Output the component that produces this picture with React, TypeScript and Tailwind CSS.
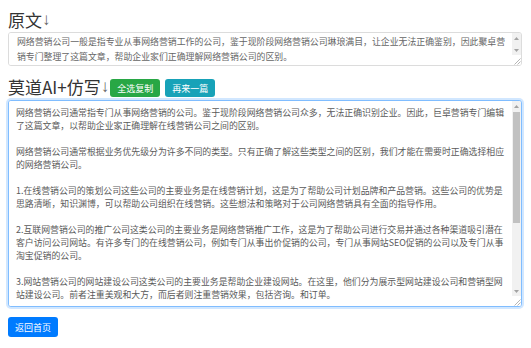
import React from 'react';

const original =
  '网络营销公司一般是指专业从事网络营销工作的公司，鉴于现阶段网络营销公司琳琅满目，让企业无法正确鉴别，因此聚卓营销专门整理了这篇文章，帮助企业家们正确理解网络营销公司的区别。';

const rewritten = [
  '网络营销公司通常指专门从事网络营销的公司。鉴于现阶段网络营销公司众多，无法正确识别企业。因此，巨卓营销专门编辑了这篇文章，以帮助企业家正确理解在线营销公司之间的区别。',
  '网络营销公司通常根据业务优先级分为许多不同的类型。只有正确了解这些类型之间的区别，我们才能在需要时正确选择相应的网络营销公司。',
  '1.在线营销公司的策划公司这些公司的主要业务是在线营销计划，这是为了帮助公司计划品牌和产品营销。这些公司的优势是思路清晰，知识渊博，可以帮助公司组织在线营销。这些想法和策略对于公司网络营销具有全面的指导作用。',
  '2.互联网营销公司的推广公司这类公司的主要业务是网络营销推广工作，这是为了帮助公司进行交易并通过各种渠道吸引潜在客户访问公司网站。有许多专门的在线营销公司，例如专门从事出价促销的公司，专门从事网站SEO促销的公司以及专门从事淘宝促销的公司。',
  '3.网站营销公司的网站建设公司这类公司的主要业务是帮助企业建设网站。在这里，他们分为展示型网站建设公司和营销型网站建设公司。前者注重美观和大方，而后者则注重营销效果，包括咨询。和订单。',
  '4.综合型网络营销公司这类公司的业务范围比较广泛，既包括网络营销策划，也包括网站建设和网络推广，能够为企业提供一站式的网络营销服务。',
  '总之，企业在选择网络营销公司时，应根据自身的实际需求选择合适的类型，这样才能真正发挥网络营销的作用，为企业带来更多的客户和订单。',
].join('\n\n');

const font = { fontFamily: '"Noto Sans CJK SC", "Noto Sans", sans-serif' };

function Heading({ children }: { children: React.ReactNode }) {
  return (
    <h4 className="text-[17px] leading-[20px] font-normal text-[#333] flex items-center">
      {children}
      <span className="text-[#666]" style={{ fontFamily: '"Liberation Sans", Arial, sans-serif' }}>
        ↓
      </span>
    </h4>
  );
}

// hand-drawn scrollbar column (arrows, track, optional thumb, resize grip)
function ScrollBar({ thumbTop, thumbHeight }: { thumbTop?: number; thumbHeight?: number }) {
  return (
    <div className="w-[9px] shrink-0 flex flex-col bg-[#f1f1f1]">
      <div className="h-[10px] flex items-center justify-center">
        <svg width="5" height="3" viewBox="0 0 5 3">
          <path d="M2.5 0L5 3H0z" fill="#a3a3a3" />
        </svg>
      </div>
      <div className="flex-1 flex flex-col">
        {thumbHeight ? (
          <div className="mx-[1px] bg-[#c1c1c1]" style={{ marginTop: thumbTop, height: thumbHeight }} />
        ) : null}
      </div>
      <div className="h-[10px] flex items-center justify-center">
        <svg width="5" height="3" viewBox="0 0 5 3">
          <path d="M0 0H5L2.5 3z" fill="#a3a3a3" />
        </svg>
      </div>
      <div className="h-[10px] bg-white flex items-end justify-end">
        <svg width="8" height="8" viewBox="0 0 8 8">
          <path d="M7.5 1.5L1.5 7.5M7.5 4.5L4.5 7.5" stroke="#b5b5b5" strokeWidth="1" />
        </svg>
      </div>
    </div>
  );
}

export default function App() {
  return (
    <div className="w-[531px] h-[348px] bg-white pl-[8px] pt-[10px]" style={font}>
      <Heading>原文</Heading>
      <div className="mt-[2px] w-[514px] h-[34px] flex border border-[#dcdcdc] rounded-[3px] overflow-hidden bg-white">
        <textarea
          readOnly
          defaultValue={original}
          className="flex-1 min-w-0 resize-none overflow-hidden bg-white pl-[8px] pr-[1px] pt-[1px] pb-[1px] text-[8.9px] leading-[15px] text-[#666] outline-none"
        />
        <ScrollBar />
      </div>

      <div className="flex items-end h-[20px] mt-[11px]">
        <Heading>莫道AI+仿写</Heading>
        <button className="ml-[1px] h-[18px] w-[50px] rounded-[3px] bg-[#28a745] text-white text-[9px] leading-none">
          全选复制
        </button>
        <button className="ml-[5px] h-[18px] w-[50px] rounded-[3px] bg-[#17a2b8] text-white text-[9px] leading-none">
          再来一篇
        </button>
      </div>

      <div className="mt-[3px] w-[514px] h-[207px] flex border border-[#80bdff] rounded-[3px] overflow-hidden bg-white shadow-[0_0_0_2px_rgba(0,123,255,0.18)]">
        <textarea
          readOnly
          defaultValue={rewritten}
          className="flex-1 min-w-0 resize-none overflow-hidden bg-white pl-[7px] pr-[7.5px] pt-[5px] pb-[2px] text-[8.9px] leading-[13px] text-[#5a5a5a] outline-none"
        />
        <ScrollBar thumbTop={1} thumbHeight={111} />
      </div>

      <button className="block mt-[10px] h-[20px] w-[50px] rounded-[3px] bg-[#007bff] text-white text-[9px] leading-none">
        返回首页
      </button>
    </div>
  );
}
